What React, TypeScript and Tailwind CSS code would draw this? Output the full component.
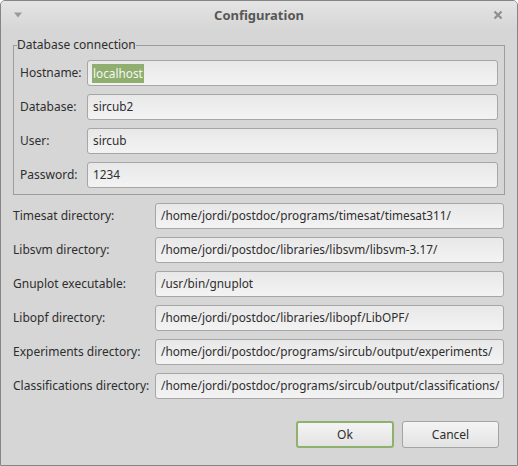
import React from "react";

const FONT = { fontFamily: '"Noto Sans", "Open Sans", sans-serif' };

const DB_FIELDS = [
  { label: "Hostname:", value: "localhost", selected: true },
  { label: "Database:", value: "sircub2" },
  { label: "User:", value: "sircub" },
  { label: "Password:", value: "1234" },
];

const PATHS = [
  { label: "Timesat directory:", value: "/home/jordi/postdoc/programs/timesat/timesat311/" },
  { label: "Libsvm directory:", value: "/home/jordi/postdoc/libraries/libsvm/libsvm-3.17/" },
  { label: "Gnuplot executable:", value: "/usr/bin/gnuplot" },
  { label: "Libopf directory:", value: "/home/jordi/postdoc/libraries/libopf/LibOPF/" },
  { label: "Experiments directory:", value: "/home/jordi/postdoc/programs/sircub/output/experiments/" },
  { label: "Classifications directory:", value: "/home/jordi/postdoc/programs/sircub/output/classifications/" },
];

function Field({ value, selected }: { value: string; selected?: boolean }) {
  return (
    <div className="flex-1 h-[26px] flex items-center rounded-[3px] border border-[#a6a6a6] bg-gradient-to-b from-[#e8e8e8] to-[#f3f3f3] pl-[4px] overflow-hidden whitespace-nowrap text-[11.8px] text-[#2e2e2e]">
      {selected ? (
        <span className="bg-[#8fae6f] text-[#f4f7f0] px-[1px] leading-[19px]">{value}</span>
      ) : (
        <span className="pl-[1px]">{value}</span>
      )}
    </div>
  );
}

function Button({ label, focused }: { label: string; focused?: boolean }) {
  return (
    <button
      className={`h-[27px] rounded-[3px] border bg-gradient-to-b from-[#f4f4f4] to-[#e3e3e3] text-[12px] text-[#2e2e2e] ${
        focused ? "w-[98px] border-[#8fb06e] border-2" : "w-[97px] border-[#a3a3a3]"
      }`}
    >
      {label}
    </button>
  );
}

export default function App() {
  return (
    <div style={FONT} className="w-[518px] h-[466px] bg-[#d6d6d6] flex flex-col border border-[#858585] rounded-t-[5px] overflow-hidden">
      {/* title bar */}
      <div className="h-[29px] shrink-0 flex items-center px-[12px] bg-gradient-to-b from-[#e4e4e4] to-[#d6d6d6]">
        <svg width="10" height="6" viewBox="0 0 10 6" className="mt-[-2px]">
          <path d="M1 0.5 H9 L5 5.5 Z" fill="#9a9a9a" />
        </svg>
        <div className="flex-1 text-center font-bold text-[13px] text-[#575757] pl-[2px]">Configuration</div>
        <svg width="10" height="10" viewBox="0 0 10 10" className="mr-[2px] mt-[-2px]">
          <path d="M1.5 1.5 L8.5 8.5 M8.5 1.5 L1.5 8.5" stroke="#8f8f8f" strokeWidth="2.2" />
        </svg>
      </div>

      <div className="flex-1 flex flex-col pl-[12px] pr-[12px] pt-[6px]">
        <fieldset className="border border-[#9c9c9c] pb-[6px]">
          <legend className="ml-[3px] text-[12px] text-[#2e2e2e] leading-[18px]">Database connection</legend>
          <div className="flex flex-col gap-[8px] pt-[6px] pl-[6px] pr-[6px]">
            {DB_FIELDS.map((f) => (
              <div key={f.label} className="flex items-center">
                <div className="w-[67px] text-[12px] text-[#2e2e2e]">{f.label}</div>
                <Field value={f.value} selected={f.selected} />
              </div>
            ))}
          </div>
        </fieldset>

        <div className="flex flex-col gap-[8px] mt-[8px] pr-[1px]">
          {PATHS.map((p) => (
            <div key={p.label} className="flex items-center">
              <div className="w-[142px] text-[12px] text-[#2e2e2e] whitespace-nowrap">{p.label}</div>
              <Field value={p.value} />
            </div>
          ))}
        </div>

        <div className="flex justify-end gap-[8px] mt-[22px] pr-[6px]">
          <Button label="Ok" focused />
          <Button label="Cancel" />
        </div>
      </div>
    </div>
  );
}
